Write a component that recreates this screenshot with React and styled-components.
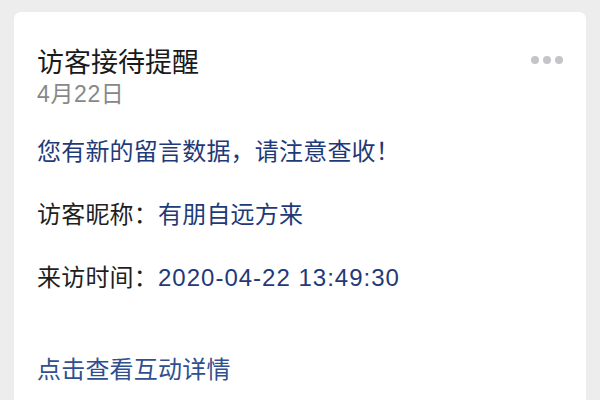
import React from "react";
import styled, { createGlobalStyle } from "styled-components";

const GlobalStyle = createGlobalStyle`
  body {
    margin: 0;
    background: #ededed;
    font-family: "Liberation Sans", "Noto Sans CJK SC", sans-serif;
  }
`;

const Page = styled.div`
  padding: 12px 14px 0;
  height: 400px;
  box-sizing: border-box;
  overflow: hidden;
`;

const Card = styled.div`
  background: #fff;
  border-radius: 7px;
  padding: 34px 23px 40px;
  min-height: 420px;
  box-sizing: border-box;
`;

const Header = styled.div`
  display: flex;
  justify-content: space-between;
  align-items: flex-start;
`;

const Title = styled.div`
  font-size: 27px;
  line-height: 34px;
  color: #1a1a1a;
`;

const DateText = styled.div`
  font-size: 23px;
  line-height: 28px;
  letter-spacing: 0.6px;
  color: #888;
`;

const More = styled.div`
  display: flex;
  gap: 4px;
  margin-top: 10px;
`;

const Dot = styled.span`
  width: 8px;
  height: 8px;
  border-radius: 50%;
  background: #c5c5c9;
`;

const Line = styled.div`
  font-size: 24px;
  line-height: 32px;
  letter-spacing: 0.2px;
  color: ${(p) => p.color || "#1f1f1f"};
  margin-top: ${(p) => p.gap || 31}px;
`;

const Value = styled.span`
  color: #1f3a78;
  letter-spacing: ${(p) => (p.numeric ? "1px" : "0.2px")};
`;

export default function App() {
  return (
    <>
      <GlobalStyle />
      <Page>
        <Card>
          <Header>
            <div>
              <Title>访客接待提醒</Title>
              <DateText>4月22日</DateText>
            </div>
            <More>
              <Dot />
              <Dot />
              <Dot />
            </More>
          </Header>
          <Line color="#1f3a78" gap={28}>您有新的留言数据，请注意查收！</Line>
          <Line>
            访客昵称：<Value>有朋自远方来</Value>
          </Line>
          <Line>
            来访时间：<Value numeric>2020-04-22 13:49:30</Value>
          </Line>
          <Line color="#2f4f8f" gap={60}>点击查看互动详情</Line>
        </Card>
      </Page>
    </>
  );
}
